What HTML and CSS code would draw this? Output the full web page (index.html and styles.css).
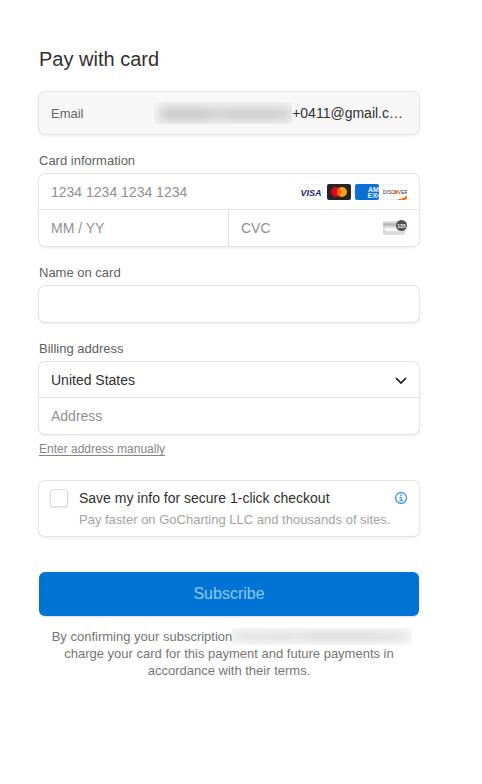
FILE: index.html
```html
<!DOCTYPE html>
<html lang="en">
<head>
<meta charset="utf-8">
<meta name="viewport" content="width=device-width, initial-scale=1">
<title>Pay with card</title>
<link rel="stylesheet" href="styles.css">
</head>
<body>
<main class="checkout">
  <h1 class="title">Pay with card</h1>
  <form>
    <div class="panel email">
      <span class="email-label">Email</span>
      <span class="email-value"><span class="redacted redacted-email"><span class="smudge"></span></span>+0411@gmail.c…</span>
    </div>

    <fieldset class="group">
      <legend class="label">Card information</legend>
      <div class="panel">
        <div class="row">
          <input class="field" type="text" placeholder="1234 1234 1234 1234" aria-label="Card number">
          <span class="brands">
            <svg class="brand" viewBox="0 0 24 16" role="img" aria-label="Visa">
              <rect x=".5" y=".5" width="23" height="15" rx="1.5" fill="#fff" stroke="#f0f0f2"/>
              <text x="12" y="11.6" class="visa">VISA</text>
            </svg>
            <svg class="brand" viewBox="0 0 24 16" role="img" aria-label="Mastercard">
              <rect width="24" height="16" rx="2" fill="#252525"/>
              <circle cx="9" cy="8" r="5" fill="#eb001b"/>
              <circle cx="15" cy="8" r="5" fill="#f79e1b"/>
              <path d="M12 4a5 5 0 0 1 0 8a5 5 0 0 1 0-8z" fill="#ff5f00"/>
            </svg>
            <svg class="brand" viewBox="0 0 24 16" role="img" aria-label="American Express">
              <rect width="24" height="16" rx="2" fill="#0a70d2"/>
              <text x="13" y="7.800" class="amex">AM</text>
              <text x="12.500" y="13.600" class="amex">EX</text>
              <path d="M21 9l3 4.500M21.500 13.500 24 10" fill="none" stroke="#cfe6fa" stroke-width=".9"/>
            </svg>
            <svg class="brand" viewBox="0 0 24 16" role="img" aria-label="Discover">
              <rect x=".5" y=".5" width="23" height="15" rx="1.5" fill="#fff" stroke="#f0f0f2"/>
              <path d="M13 16c4-.7 8-2 11-4.500V14a2 2 0 0 1-2 2z" fill="#f27712"/>
              <text x="0" y="9.700" class="discover">DISC</text>
              <circle cx="12.900" cy="8" r="1.900" fill="#f27712"/>
              <text x="14.800" y="9.700" class="discover">VER</text>
            </svg>
          </span>
        </div>
        <div class="row split">
          <input class="field" type="text" placeholder="MM / YY" aria-label="Expiration date">
          <div class="cvc">
            <input class="field" type="text" placeholder="CVC" aria-label="Security code">
            <svg class="brand" viewBox="0 0 24 16" aria-hidden="true">
              <rect y="1" width="22" height="14" rx="1" fill="#dcdcdc"/>
              <rect y="3" width="22" height="3" fill="#bcbcbc"/>
              <rect x="2" y="8" width="18" height="3" fill="#f8f8f8"/>
              <circle cx="18.500" cy="5.500" r="5.500" fill="#505050"/>
              <text x="18.500" y="7.500" class="digits">135</text>
            </svg>
          </div>
        </div>
      </div>
    </fieldset>

    <div class="group">
      <label class="label" for="name">Name on card</label>
      <div class="panel"><input class="field" id="name" type="text"></div>
    </div>

    <fieldset class="group">
      <legend class="label">Billing address</legend>
      <div class="panel">
        <div class="row">
          <select class="field" aria-label="Country">
            <option>United States</option>
          </select>
          <svg class="chevron" viewBox="0 0 12 12" aria-hidden="true"><path d="M1 4 6 9l5-5" fill="none" stroke="#1a1a1a" stroke-width="1.700"/></svg>
        </div>
        <div class="row split">
          <input class="field" type="text" placeholder="Address" aria-label="Address">
        </div>
      </div>
      <a class="manual" href="#address">Enter address manually</a>
    </fieldset>

    <div class="panel save">
      <input class="check" type="checkbox" id="save">
      <div class="save-text">
        <label class="save-title" for="save">Save my info for secure 1-click checkout</label>
        <p class="save-note">Pay faster on GoCharting LLC and thousands of sites.</p>
      </div>
      <svg class="info" viewBox="0 0 12 12" role="img" aria-label="More information">
        <circle cx="6" cy="6" r="5.400" fill="none" stroke="#1a82d6" stroke-width="1.100"/>
        <path d="M4.600 5.200h1.600v3.500M4.300 8.800h3.600" fill="none" stroke="#1a82d6"/>
        <circle cx="6" cy="3.200" r=".8" fill="#1a82d6"/>
      </svg>
    </div>

    <button class="subscribe" type="submit">Subscribe</button>
    <p class="terms">By confirming your subscription<span class="redacted redacted-terms"><span class="smudge"></span></span> charge your card for this payment and future payments in accordance with their terms.</p>
  </form>
</main>
</body>
</html>
```
FILE: styles.css
```css
* {
  box-sizing: border-box;
}

body {
  margin: 0;
  background: #fff;
  color: #303030;
  font: 14px/16px "Liberation Sans", Arial, sans-serif;
}

.checkout {
  padding: 47px 63px 48px 39px;
}

.title {
  margin: 0 0 21px;
  font-size: 20px;
  line-height: 24px;
  font-weight: 400;
}

.panel {
  border-radius: 6px;
  background: #fff;
  box-shadow: 0 0 0 1px #e4e4e4, 0 2px 4px rgba(0, 0, 0, 0.08);
}

.email {
  display: flex;
  align-items: center;
  justify-content: space-between;
  height: 42px;
  padding: 0 16px 0 12px;
  background: #f7f7f7;
}

.email-label {
  color: #666;
  font-size: 13px;
  line-height: 13px;
}

.email-value {
  display: flex;
  align-items: center;
}

.group {
  min-width: 0;
  margin: 19px 0 0;
  padding: 0;
  border: 0;
}

.label {
  display: block;
  margin-bottom: 5px;
  padding: 0;
  color: #606060;
  font-size: 13px;
  line-height: 16px;
}

.row {
  display: flex;
  align-items: center;
  height: 36px;
}

.split {
  display: grid;
  grid-auto-flow: column;
  grid-auto-columns: minmax(0, 1fr);
  height: 37px;
  margin-top: -1px;
  border-top: 1px solid #e4e4e4;
}

.field {
  flex: 1;
  width: 100%;
  min-width: 0;
  height: 36px;
  margin: 0;
  padding: 0 12px;
  border: 0;
  outline: 0;
  appearance: none;
  background: transparent;
  color: #303030;
  font: inherit;
}

.panel > .field {
  display: block;
}

.field::placeholder {
  color: #909090;
  opacity: 1;
}

.brands {
  display: flex;
  gap: 4px;
  padding-right: 12px;
}

.brand {
  display: block;
  flex: none;
  width: 24px;
  height: 16px;
}

.visa {
  fill: #1a1f71;
  font-size: 9px;
  font-weight: 700;
  font-style: italic;
  text-anchor: middle;
}

.amex {
  fill: #e2f0fc;
  font-size: 7px;
  font-weight: 700;
}

.discover {
  fill: #303030;
  font-size: 5px;
}

.digits {
  fill: #fff;
  font-size: 5px;
  font-weight: 700;
  text-anchor: middle;
}

.cvc {
  display: flex;
  align-items: center;
  height: 100%;
  margin-left: -1px;
  padding-right: 12px;
  border-left: 1px solid #e4e4e4;
}

.chevron {
  flex: none;
  width: 12px;
  height: 12px;
  margin-right: 12px;
}

.manual {
  display: table;
  margin-top: 7px;
  color: #858585;
  font-size: 12px;
  text-underline-offset: 2px;
}

.save {
  display: flex;
  align-items: flex-start;
  margin-top: 24px;
  padding: 8px 12px 8px 11px;
}

.check {
  flex: none;
  width: 18px;
  height: 18px;
  margin: 0 11px 0 0;
  border: 1px solid #dcdcdc;
  border-radius: 3px;
  appearance: none;
  background: #fff;
  box-shadow: 0 1px 2px rgba(0, 0, 0, 0.12);
}

.save-text {
  flex: 1;
}

.save-title {
  display: block;
  line-height: 18px;
}

.save-note {
  margin: 4px 0 0;
  color: #a3a3a3;
  font-size: 13px;
  line-height: 17px;
}

.info {
  flex: none;
  width: 12px;
  height: 12px;
  margin-top: 3px;
}

.subscribe {
  display: block;
  width: 100%;
  height: 44px;
  margin: 36px 0 12px;
  padding: 0;
  border: 0;
  border-radius: 6px;
  background: #0074d4;
  box-shadow: 0 1px 2px rgba(0, 0, 0, 0.15);
  color: #8dc8f4;
  font: inherit;
  font-size: 16px;
}

.terms {
  margin: 0;
  color: #757575;
  font-size: 13px;
  line-height: 17px;
  text-align: center;
}

.redacted {
  display: inline-block;
  overflow: hidden;
}

.smudge {
  display: block;
  filter: blur(5px);
}

.redacted-email {
  width: 138px;
  height: 22px;
  padding: 5px 0 3px 6px;
  background: #f3f3f3;
}

.redacted-email .smudge {
  height: 14px;
  background: linear-gradient(90deg, #cacaca 0 36%, #d6d6d6 42%, #cecece 52% 85%, #d4d4d4);
}

.redacted-terms {
  width: 180px;
  height: 17px;
  margin-right: -6px;
  padding: 4px 4px 4px 0;
  background: #fafafa;
  vertical-align: top;
}

.redacted-terms .smudge {
  height: 9px;
  background: linear-gradient(90deg, #e0e0e0, #dadada 30%, #e2e2e2 38%, #d6d6d6 45% 75%, #dedede);
}
```
